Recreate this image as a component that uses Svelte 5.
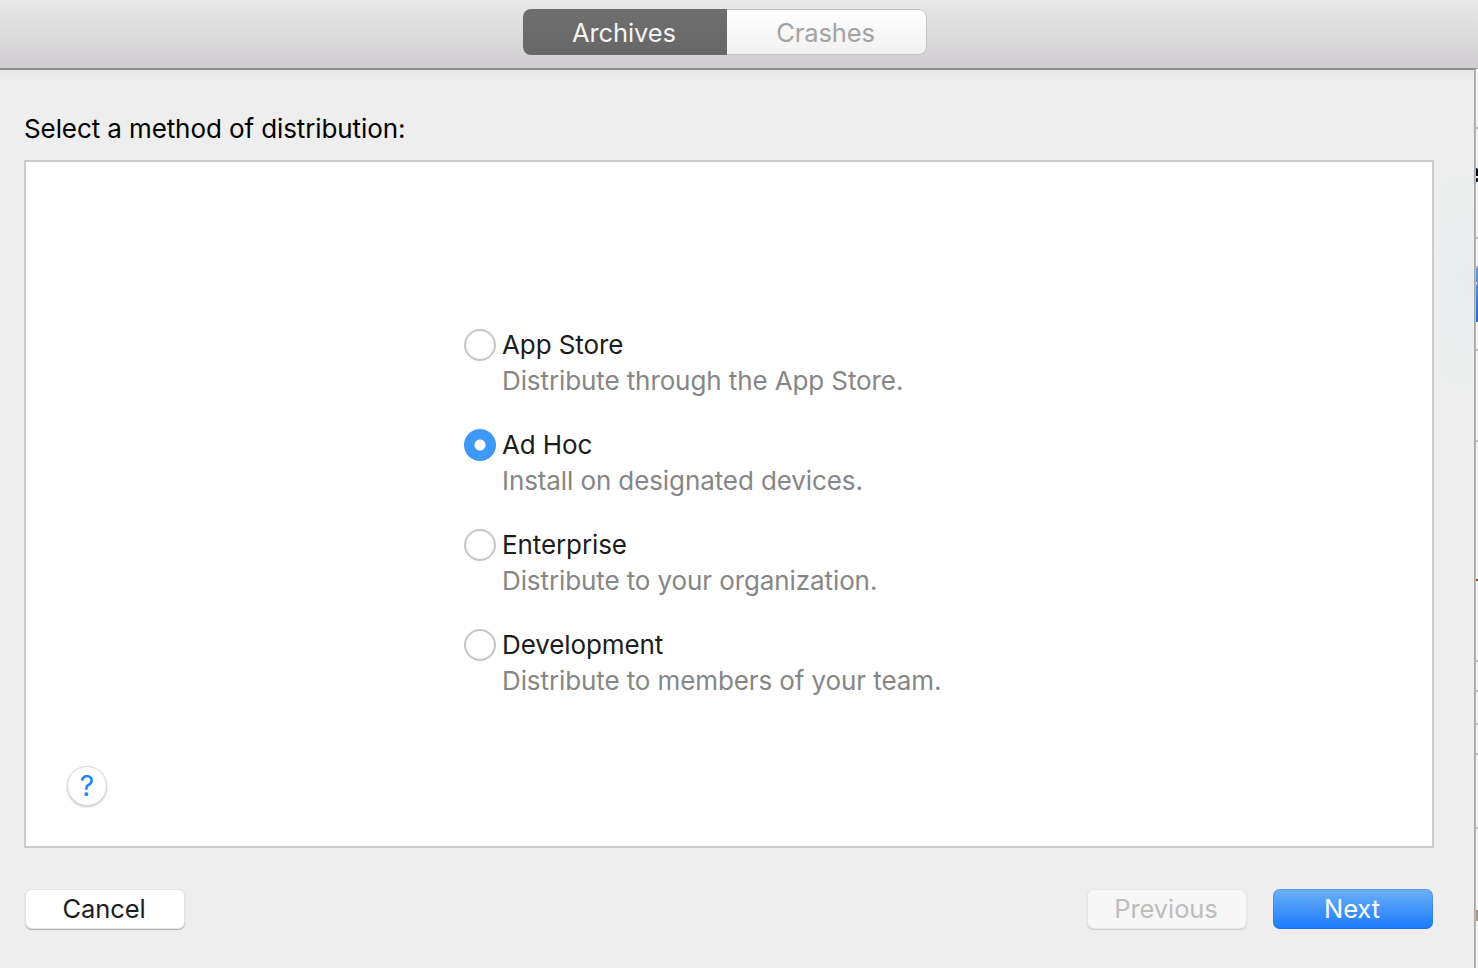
<script>
  // Clipped window behind the sheet: row heights end in a 2px separator
  const rows = [
    { h: 60 }, { h: 110 }, { h: 29 }, { h: 54, selected: true }, { h: 29 }, { h: 91 },
    { h: 220 }, { h: 30 }, { h: 33 }, { h: 30 }, { h: 74 },
  ];

  const methods = [
    { name: 'App Store', detail: 'Distribute through the App Store.' },
    { name: 'Ad Hoc', detail: 'Install on designated devices.' },
    { name: 'Enterprise', detail: 'Distribute to your organization.' },
    { name: 'Development', detail: 'Distribute to members of your team.' },
  ];

  let picked = $state('Ad Hoc');
</script>

<div class="window">
  <header class="toolbar">
    <div class="segments">
      <button class="segment active">Archives</button>
      <button class="segment">Crashes</button>
    </div>
  </header>

  <div class="content">
    <main class="sheet">
      <h1>Select a method of distribution:</h1>

      <section class="panel">
        <div class="methods">
          {#each methods as method}
            <label class="method">
              <input type="radio" name="method" value={method.name} bind:group={picked} />
              <span class="radio"></span>
              <span class="name">{method.name}</span>
              <span class="detail">{method.detail}</span>
            </label>
          {/each}
        </div>
        <button class="help">?</button>
      </section>

      <footer class="actions">
        <button class="btn">Cancel</button>
        <div class="spacer"></div>
        <button class="btn" disabled>Previous</button>
        <button class="btn primary">Next</button>
      </footer>
    </main>

    <aside class="behind">
      {#each rows as row}
        <div class="row" class:selected={row.selected} style="height: {row.h}px"></div>
      {/each}
      <span class="clip clip-n">n</span>
      <span class="clip clip-e">e</span>
      <span class="clip clip-v">V</span>
      <i class="mark mark-dot"></i>
      <i class="mark mark-tan"></i>
    </aside>
  </div>
</div>

<style>
  :global(body) {
    margin: 0;
    background: #eee;
  }

  .window {
    display: flex;
    flex-direction: column;
    width: 1478px;
    height: 968px;
    overflow: hidden;
    font-family: Inter, "Liberation Sans", sans-serif;
    color: #1c1c1c;
  }

  .toolbar {
    display: flex;
    justify-content: center;
    box-sizing: border-box;
    height: 70px;
    padding: 9px 28px 0 0;
    background: linear-gradient(#e9e8e9, #d0ced0);
    border-bottom: 2px solid #8f8f8f;
  }

  .segments {
    display: flex;
    width: 404px;
    height: 46px;
    border-radius: 8px;
    overflow: hidden;
  }

  .segment {
    flex: 1;
    border: 0;
    padding: 0 2px 0 0;
    font: inherit;
    font-size: 25.5px;
    letter-spacing: -0.1px;
  }

  .segment.active {
    flex: 0 0 204px;
    color: #f4f4f4;
    background: linear-gradient(#6f6f6f, #676767);
  }

  .segment:not(.active) {
    color: #a3a3a3;
    background: linear-gradient(#fff, #f1f1f1);
    border: 1px solid #c4c3c4;
    border-left: 0;
    border-radius: 0 8px 8px 0;
  }

  .content {
    flex: 1;
    display: flex;
    min-height: 0;
  }

  .sheet {
    flex: 1;
    display: flex;
    flex-direction: column;
    padding: 0 40px 0 24px;
    background:
      linear-gradient(#e6e6e6, rgba(238, 238, 238, 0) 10px),
      radial-gradient(90px 130px at 100% 210px, #e7eded, rgba(238, 238, 238, 0)),
      #eee;
  }

  h1 {
    margin: 0;
    padding-top: 42px;
    height: 48px;
    font-size: 26px;
    font-weight: 400;
    line-height: 34px;
    letter-spacing: -0.1px;
    color: #000;
  }

  .panel {
    display: flex;
    flex-direction: column;
    justify-content: space-between;
    box-sizing: border-box;
    height: 688px;
    padding: 165px 0 40px 41px;
    background: #fff;
    border: 2px solid #cbcbcb;
  }

  .methods {
    display: flex;
    flex-direction: column;
    gap: 28px;
    padding-left: 397px;
  }

  .method {
    display: grid;
    grid-template-columns: 32px 1fr;
    column-gap: 6px;
    grid-auto-rows: 36px;
    align-items: center;
  }

  .method input {
    display: none;
  }

  .radio {
    box-sizing: border-box;
    width: 32px;
    height: 32px;
    border-radius: 50%;
    background: #fff;
    border: 2px solid #c6c6c6;
    box-shadow: inset 0 -1px 2px rgba(0, 0, 0, 0.05);
  }

  .method input:checked + .radio {
    border: 0;
    background: radial-gradient(circle, #fff 5px, #3f99f8 6px);
  }

  .name,
  .detail {
    font-size: 26px;
    line-height: 34px;
    letter-spacing: -0.1px;
  }

  .detail {
    grid-column: 2;
    color: #868686;
  }

  .help {
    box-sizing: border-box;
    width: 40px;
    height: 40px;
    padding: 0;
    border-radius: 50%;
    border: 1px solid #d8d8d8;
    background: #fff;
    box-shadow: 0 1px 2px rgba(0, 0, 0, 0.22);
    color: #1d84f5;
    font-family: inherit;
    font-size: 28px;
    line-height: 38px;
  }

  .actions {
    display: flex;
    gap: 26px;
    margin-top: 41px;
    padding: 0 1px;
  }

  .spacer {
    flex: 1;
  }

  .btn {
    box-sizing: border-box;
    width: 160px;
    height: 40px;
    padding: 0 2px 2px 0;
    border: 0;
    border-radius: 7px;
    background: #fff;
    box-shadow: inset 0 0 0 1px rgba(0, 0, 0, 0.1), 0 1px 1px rgba(0, 0, 0, 0.28);
    color: #1c1c1c;
    font-family: inherit;
    font-size: 25.5px;
    letter-spacing: -0.1px;
  }

  .btn:disabled {
    background: #f7f7f7;
    color: #bdbdbd;
    box-shadow: inset 0 0 0 1px rgba(0, 0, 0, 0.07), 0 1px 1px rgba(0, 0, 0, 0.14);
  }

  .btn.primary {
    background: linear-gradient(#6db0f9, #1a7bfb);
    color: #fff;
    box-shadow: inset 0 0 0 1px rgba(0, 80, 220, 0.2);
  }

  .behind {
    position: relative;
    flex: 0 0 4px;
    margin-top: -1px;
    overflow: hidden;
    background: #f1f1f1;
  }

  .behind::before {
    content: "";
    position: absolute;
    inset: 0 auto 0 0;
    width: 2px;
    background: linear-gradient(90deg, #9c9c9c, #c4c4c4);
    z-index: 1;
  }

  .row {
    box-sizing: border-box;
    border-bottom: 2px solid #bdbdbd;
  }

  .row.selected {
    background: linear-gradient(#5f9fe2, #1c6fd9);
    border-bottom: 0;
  }

  .clip {
    position: absolute;
    left: -10px;
    font-size: 24px;
    line-height: 24px;
  }

  .clip-n {
    top: 19px;
    left: -12px;
    color: #1e2a3a;
  }

  .clip-e {
    top: 90px;
    font-size: 28px;
    line-height: 28px;
    font-weight: 700;
    color: #000;
  }

  .clip-v {
    top: 211px;
    left: -13px;
    color: #fff;
  }

  .mark {
    position: absolute;
    left: 2px;
    width: 2px;
  }

  .mark-dot {
    top: 510px;
    height: 2px;
    background: #7a4a1a;
  }

  .mark-tan {
    top: 841px;
    height: 11px;
    background: #a89a82;
  }
</style>
